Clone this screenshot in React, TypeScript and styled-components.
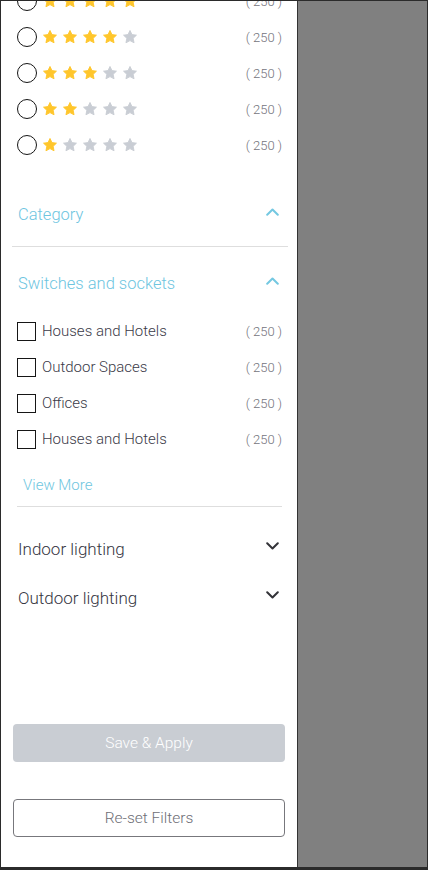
import React from "react";
import styled, { createGlobalStyle } from "styled-components";

const Global = createGlobalStyle`
  html, body { margin: 0; padding: 0; background: #2b2b2b; }
  * { box-sizing: border-box; }
  body { font-family: Roboto, "Noto Sans", Arial, sans-serif; font-weight: 300; }
`;

const Frame = styled.div`
  width: 428px;
  height: 870px;
  border-style: solid;
  border-color: #2b2b2b;
  border-width: 1px 1px 3px 1px;
  background: #808080;
  display: flex;
  overflow: hidden;
`;

const Panel = styled.aside`
  width: 297px;
  height: 100%;
  background: #ffffff;
  border-right: 1px solid #333333;
  display: flex;
  flex-direction: column;
  overflow: hidden;
`;

const Filters = styled.div`
  flex: 1;
  padding: 0 15px 0 16px;
  display: flex;
  flex-direction: column;
`;

const RatingList = styled.div`
  margin-top: -18px;
  display: flex;
  flex-direction: column;
`;

const OptionRow = styled.label`
  height: 36px;
  display: flex;
  align-items: center;
  cursor: pointer;
`;

const Radio = styled.span`
  width: 20px;
  height: 20px;
  border: 1.5px solid #161616;
  border-radius: 50%;
  flex: none;
`;

const Stars = styled.span`
  display: flex;
  gap: 4px;
  margin-left: 5px;
`;

const Count = styled.span`
  margin-left: auto;
  font-size: 13px;
  font-weight: 300;
  color: #74747c;
  white-space: pre;
`;

const Checkbox = styled.span`
  width: 19px;
  height: 19px;
  border: 1.5px solid #161616;
  flex: none;
`;

const OptionLabel = styled.span`
  margin-left: 6px;
  font-size: 15px;
  font-weight: 300;
  color: #3a3a48;
`;

const SectionHeader = styled.div<{ $tone: "accent" | "plain"; $h: number }>`
  height: ${(p) => p.$h}px;
  display: flex;
  align-items: center;
  justify-content: space-between;
  font-size: ${(p) => (p.$tone === "accent" ? 16.5 : 17)}px;
  font-weight: 300;
  color: ${(p) => (p.$tone === "accent" ? "#6ec5df" : "#363642")};
  padding-left: 1px;
  svg { margin-right: 3px; margin-bottom: 5px; }
`;

const Divider = styled.hr<{ $ml: number; $mr: number; $mt: number }>`
  border: 0;
  height: 1px;
  background: #dedede;
  margin: ${(p) => p.$mt}px ${(p) => p.$mr}px 0 ${(p) => p.$ml}px;
`;

const Spacer = styled.div<{ $h: number }>`
  height: ${(p) => p.$h}px;
  flex: none;
`;

const CheckList = styled.div`
  margin-top: 10px;
  display: flex;
  flex-direction: column;
`;

const ViewMore = styled.button`
  all: unset;
  margin: 18px 0 0 6px;
  height: 20px;
  line-height: 20px;
  font-family: Roboto, "Noto Sans", Arial, sans-serif;
  font-size: 15px;
  font-weight: 300;
  color: #6fc6e0;
  cursor: pointer;
`;

const Actions = styled.div`
  padding: 0 12px 30px 12px;
  display: flex;
  flex-direction: column;
  gap: 37px;
`;

const ActionButton = styled.button<{ $variant: "filled" | "outline" }>`
  height: 38px;
  border-radius: 4px;
  font-family: Roboto, "Noto Sans", Arial, sans-serif;
  font-size: 15.5px;
  font-weight: 300;
  cursor: pointer;
  background: ${(p) => (p.$variant === "filled" ? "#c9cdd3" : "#ffffff")};
  color: ${(p) => (p.$variant === "filled" ? "#ffffff" : "#6e6e76")};
  border: ${(p) => (p.$variant === "filled" ? "none" : "1px solid #77777c")};
`;

const Star = ({ on }: { on: boolean }) => (
  <svg width="16" height="16" viewBox="0 0 24 24">
    <path
      d="M12 2.2l2.95 6.2 6.75.85-4.95 4.7 1.3 6.75L12 17.4l-6.05 3.3 1.3-6.75-4.95-4.7 6.75-.85z"
      fill={on ? "#ffc62b" : "#c9cdd4"}
      stroke={on ? "#ffc62b" : "#c9cdd4"}
      strokeWidth="1.4"
      strokeLinejoin="round"
    />
  </svg>
);

const Chevron = ({ up, color }: { up: boolean; color: string }) => (
  <svg width="13" height="8" viewBox="0 0 13 8">
    <polyline
      points={up ? "1.2,6.8 6.5,1.5 11.8,6.8" : "1.2,1.2 6.5,6.5 11.8,1.2"}
      fill="none"
      stroke={color}
      strokeWidth="2"
      strokeLinecap="round"
      strokeLinejoin="round"
    />
  </svg>
);

const ratings = [5, 4, 3, 2, 1];
const categories = ["Houses and Hotels", "Outdoor Spaces", "Offices", "Houses and Hotels"];

export default function App() {
  return (
    <>
      <Global />
      <Frame>
        <Panel>
          <Filters>
            <RatingList>
              {ratings.map((r) => (
                <OptionRow key={r}>
                  <Radio />
                  <Stars>
                    {[1, 2, 3, 4, 5].map((i) => (
                      <Star key={i} on={i <= r} />
                    ))}
                  </Stars>
                  <Count>( 250 )</Count>
                </OptionRow>
              ))}
            </RatingList>

            <Spacer $h={31} />
            <SectionHeader $tone="accent" $h={40}>
              <span>Category</span>
              <Chevron up color="#74c8e1" />
            </SectionHeader>
            <Divider $ml={-5} $mr={-6} $mt={12} />

            <Spacer $h={16} />
            <SectionHeader $tone="accent" $h={40}>
              <span>Switches and sockets</span>
              <Chevron up color="#74c8e1" />
            </SectionHeader>
            <CheckList>
              {categories.map((c, i) => (
                <OptionRow key={i}>
                  <Checkbox />
                  <OptionLabel>{c}</OptionLabel>
                  <Count>( 250 )</Count>
                </OptionRow>
              ))}
            </CheckList>
            <ViewMore>View More</ViewMore>
            <Divider $ml={0} $mr={0} $mt={11} />

            <Spacer $h={17} />
            <SectionHeader $tone="plain" $h={49}>
              <span>Indoor lighting</span>
              <Chevron up={false} color="#333338" />
            </SectionHeader>
            <SectionHeader $tone="plain" $h={49}>
              <span>Outdoor lighting</span>
              <Chevron up={false} color="#333338" />
            </SectionHeader>
          </Filters>

          <Actions>
            <ActionButton $variant="filled">Save &amp; Apply</ActionButton>
            <ActionButton $variant="outline">Re-set Filters</ActionButton>
          </Actions>
        </Panel>
      </Frame>
    </>
  );
}
